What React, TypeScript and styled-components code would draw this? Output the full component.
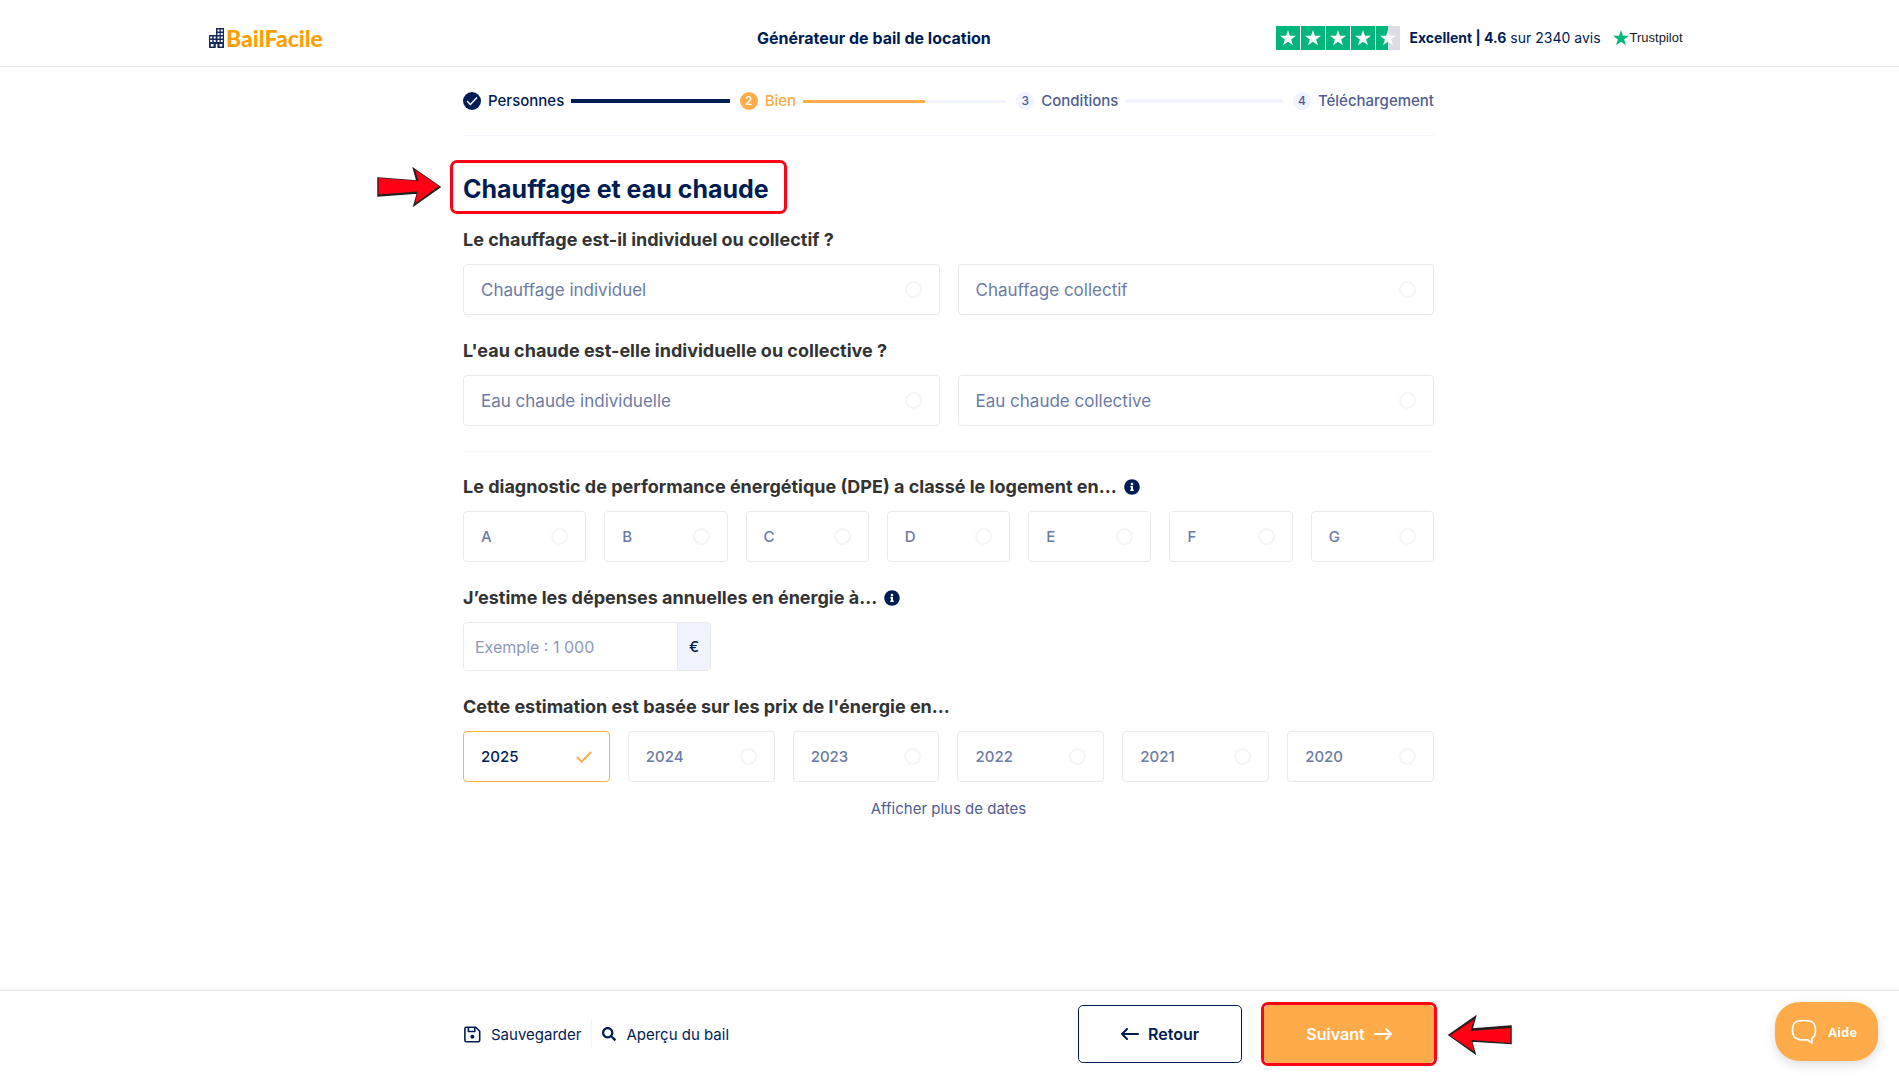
import React, { useState } from "react";
import styled, { createGlobalStyle, css } from "styled-components";
import { FaInfoCircle, FaSearch } from "react-icons/fa";

const navy = "#001c54";
const orange = "#ffab49";
const pale = "#f1f3ff";
const muted = "#6b7ba3";
const slate = "#4f5d92";
const line = "#e9e9ea";
const red = "#ff0015";

const Global = createGlobalStyle`
  *, *::before, *::after { box-sizing: border-box; }
  body { margin: 0; background: #fff; color: ${navy}; font-family: Inter, "Liberation Sans", sans-serif; }
  button, input { font-family: inherit; }
  h1, h2, p, ol, fieldset { margin: 0; padding: 0; border: 0; min-width: 0; }
  svg { display: block; flex: none; }
`;

const Page = styled.div`
  min-height: 100vh;
  display: flex;
  flex-direction: column;
`;

const Header = styled.header`
  display: grid;
  grid-template-columns: 548px 1fr auto;
  align-items: center;
  height: 67px;
  padding: 10px 11.4% 0 11%;
  border-bottom: 1px solid ${line};
`;

const Logo = styled.a`
  display: flex;
  align-items: center;
  gap: 2px;
  color: #ff9f05;
  font: 900 23px/24px Lato, sans-serif;
  text-decoration: none;
`;

const HeaderTitle = styled.p`
  font-size: 16px;
  line-height: 24px;
  font-weight: 700;
`;

const Reviews = styled.a`
  display: flex;
  align-items: center;
  color: ${navy};
  font-size: 14px;
  line-height: 24px;
  text-decoration: none;
  white-space: pre;
`;

const Stars = styled.span`
  display: flex;
  gap: 1px;
  margin-right: 10px;
`;

const StarTile = styled.span<{ $half?: boolean }>`
  display: grid;
  place-items: center;
  width: 24px;
  height: 24px;
  background: ${(p) => (p.$half ? "linear-gradient(90deg, #00b67a 50%, #dcdce6 50%)" : "#00b67a")};
`;

const Trustpilot = styled.span`
  display: flex;
  align-items: center;
  gap: 1px;
  margin-left: 12px;
  color: #191919;
  font: 13px/24px "Liberation Sans", Arial, sans-serif;
`;

const Main = styled.main`
  width: 100%;
  max-width: 1005px;
  margin: 0 auto;
  padding: 0 18px 24px 16px;
`;

const Steps = styled.ol`
  display: flex;
  align-items: center;
  height: 69px;
  border-bottom: 1px solid #f4f5fc;
  list-style: none;
`;

type StepState = "done" | "current" | "todo";

const Step = styled.li<{ $state: StepState }>`
  display: flex;
  align-items: center;
  flex: 1;
  font-size: 15px;
  line-height: 24px;
  font-weight: 500;
  color: ${(p) => ({ done: navy, current: orange, todo: slate })[p.$state]};
  &:last-child { flex: none; }
`;

const StepDot = styled.span<{ $state: StepState }>`
  display: grid;
  place-items: center;
  width: 18px;
  height: 18px;
  margin-right: 7px;
  border-radius: 50%;
  font-size: 12px;
  line-height: 18px;
  color: ${(p) => (p.$state === "todo" ? slate : "#fff")};
  background: ${(p) => ({ done: navy, current: orange, todo: pale })[p.$state]};
`;

const StepTrack = styled.span<{ $state: StepState }>`
  flex: 1;
  height: ${(p) => (p.$state === "current" ? 3 : 4)}px;
  margin: 0 10px 0 7px;
  background: ${(p) =>
    ({
      done: navy,
      current: `linear-gradient(90deg, ${orange} 60%, ${pale} 60%)`,
      todo: pale,
    })[p.$state]};
`;

const arrow = css`
  position: absolute;
  overflow: visible;
`;

const Title = styled.h1`
  position: relative;
  width: fit-content;
  margin-top: 38px;
  font-size: 25px;
  line-height: 30px;
  font-weight: 700;
  &::after {
    content: "";
    position: absolute;
    inset: -14px -18px -10px -13px;
    border: 3px solid ${red};
    border-radius: 7px;
  }
`;

const TitleArrow = styled.svg`
  ${arrow}
  right: calc(100% + 22px);
  top: -7px;
`;

const NextArrow = styled.svg`
  ${arrow}
  left: calc(100% + 15px);
  top: 9px;
`;

const Question = styled.h2`
  display: flex;
  align-items: center;
  gap: 7px;
  margin: 24px 0 12px;
  color: #333;
  font-size: 18px;
  line-height: 24px;
  font-weight: 700;
`;

const InfoButton = styled.button`
  padding: 0;
  border: 0;
  background: none;
  color: ${navy};
`;

const Options = styled.div<{ $columns: number }>`
  display: grid;
  grid-template-columns: repeat(${(p) => p.$columns}, 1fr);
  gap: 18px;
`;

const Option = styled.label<{ $checked: boolean; $compact: boolean }>`
  position: relative;
  display: flex;
  align-items: center;
  justify-content: space-between;
  height: 51px;
  padding: 0 17px;
  border: 1px solid ${(p) => (p.$checked ? "#ffb13d" : line)};
  border-radius: 4px;
  color: ${(p) => (p.$checked ? navy : muted)};
  font-size: ${(p) => (p.$compact ? 15 : 17)}px;
  line-height: 24px;
  font-weight: ${(p) => (p.$compact ? 500 : 400)};
  cursor: pointer;
`;

const HiddenRadio = styled.input`
  position: absolute;
  inset: 0;
  margin: 0;
  opacity: 0;
`;

const Ring = styled.span`
  width: 17px;
  height: 17px;
  border: 2px solid #f5f5f5;
  border-radius: 50%;
`;

const Separator = styled.hr`
  height: 1px;
  margin: 25px 0 -1px;
  border: 0;
  background: #f4f5fb;
`;

const Amount = styled.div`
  display: flex;
  width: 248px;
  height: 49px;
  border: 1px solid ${line};
  border-radius: 4px;
  overflow: hidden;
`;

const AmountInput = styled.input`
  flex: 1;
  min-width: 0;
  padding: 0 11px;
  border: 0;
  color: ${navy};
  font-size: 16px;
  &::placeholder { color: #8d99b6; opacity: 1; }
`;

const Unit = styled.span`
  display: grid;
  place-items: center;
  width: 33px;
  border-left: 1px solid #e6e8f2;
  background: ${pale};
  font-size: 15px;
  font-weight: 500;
`;

const MoreButton = styled.button`
  display: block;
  margin: 15px auto 0;
  padding: 0;
  border: 0;
  background: none;
  color: ${slate};
  font-size: 15px;
  line-height: 24px;
`;

const Footer = styled.footer`
  position: sticky;
  bottom: 0;
  margin-top: auto;
  border-top: 1px solid ${line};
  box-shadow: 0 -1px 3px rgba(0, 0, 0, 0.07);
  background: #fff;
`;

const FooterInner = styled.div`
  display: flex;
  align-items: center;
  justify-content: space-between;
  width: 100%;
  max-width: 1005px;
  margin: 0 auto;
  padding: 14px 18px 17px 17px;
`;

const Group = styled.div<{ $gap: number }>`
  display: flex;
  align-items: center;
  gap: ${(p) => p.$gap}px;
`;

const ToolButton = styled.button`
  display: flex;
  align-items: center;
  gap: 10px;
  height: 30px;
  padding: 0;
  border: 0;
  background: none;
  color: ${navy};
  font-size: 15px;
`;

const Divider = styled.span`
  width: 1px;
  height: 30px;
  background: ${pale};
`;

const NavButton = styled.button<{ $primary?: boolean }>`
  position: relative;
  display: flex;
  align-items: center;
  justify-content: center;
  gap: 9px;
  width: ${(p) => (p.$primary ? 170 : 164)}px;
  height: 58px;
  padding: 0;
  border: 1px solid ${(p) => (p.$primary ? orange : navy)};
  border-radius: 5px;
  background: ${(p) => (p.$primary ? orange : "#fff")};
  color: ${(p) => (p.$primary ? "#fff" : navy)};
  font-size: 16px;
  font-weight: 600;
  ${(p) =>
    p.$primary &&
    css`
      &::after {
        content: "";
        position: absolute;
        inset: -4px;
        border: 3px solid ${red};
        border-radius: 7px;
      }
    `}
`;

const Help = styled.button`
  position: fixed;
  right: 21px;
  bottom: 19px;
  display: flex;
  align-items: center;
  gap: 11px;
  width: 103px;
  height: 59px;
  padding: 0 16px;
  border: 0;
  border-radius: 25px / 24px;
  background: ${orange};
  box-shadow: 0 4px 12px rgba(0, 0, 0, 0.13);
  color: #fff;
  font: 700 13px/20px "Open Sans", sans-serif;
`;

const starPoints = "8,0 9.9,5.8 16,5.8 11.1,9.5 13,15.3 8,11.7 3,15.3 4.9,9.5 0,5.8 6.1,5.8";

const Star = ({ color }: { color: string }) => (
  <svg width="16" height="16" viewBox="0 0 16 16" aria-hidden>
    <polygon points={starPoints} fill={color} />
  </svg>
);

const Building = () => (
  <svg width="15" height="20" viewBox="0 0 15 20" aria-hidden>
    <path d="M0 7h7V0h8v20H0z" fill="#14295f" />
    <path
      fill="#fff"
      d="M8.5 1.5h2v2h-2zM11.8 1.5h2v2h-2zM8.5 5h2v2h-2zM11.8 5h2v2h-2zM8.5 8.5h2v2h-2zM11.8 8.5h2v2h-2zM8.5 12h2v2h-2zM11.8 12h2v2h-2zM1.2 8.5h2v2h-2zM4.7 8.5h2v2h-2zM1.2 12h2v2h-2zM4.7 12h2v2h-2zM1.8 16h2.7v2.6H1.8zM6.8 16h1.6v4H6.8zM10.6 16h2.7v2.6h-2.7z"
    />
  </svg>
);

const Arrow = ({ back }: { back?: boolean }) => (
  <svg width="18" height="12" viewBox="0 0 18 12" fill="none" stroke="currentColor" strokeWidth="2" strokeLinecap="round" strokeLinejoin="round" aria-hidden>
    <path d={back ? "M17 6H1M6 1 1 6l5 5" : "M1 6h16M12 1l5 5-5 5"} />
  </svg>
);

const SaveIcon = () => (
  <svg width="17" height="17" viewBox="0 0 17 17" fill="none" stroke="currentColor" strokeWidth="1.6" strokeLinejoin="round" aria-hidden>
    <path d="M2.3 1.3h9.4l4 4v9a1.4 1.4 0 0 1-1.4 1.4h-12A1.4 1.4 0 0 1 .9 14.3V2.7a1.4 1.4 0 0 1 1.4-1.4z" />
    <path d="M4.4 1.3v4.2h6.4V1.3" />
    <circle cx="8.4" cy="10.8" r="2" fill="currentColor" stroke="none" />
  </svg>
);

const CheckIcon = () => (
  <svg width="16" height="12" viewBox="0 0 16 12" fill="none" stroke={orange} strokeWidth="2" aria-hidden>
    <path d="M1 6l4.7 4.6L15 1" />
  </svg>
);

interface FieldProps {
  name: string;
  question: string;
  options: string[];
  info?: boolean;
  initial?: string;
  compact?: boolean;
}

function Field({ name, question, options, info, initial = "", compact = false }: FieldProps) {
  const [value, setValue] = useState(initial);
  return (
    <fieldset aria-labelledby={`${name}-q`}>
      <Question id={`${name}-q`}>
        {question}
        {info && <Info />}
      </Question>
      <Options $columns={options.length}>
        {options.map((o) => (
          <Option key={o} $checked={o === value} $compact={compact}>
            <HiddenRadio type="radio" name={name} checked={o === value} onChange={() => setValue(o)} />
            {o}
            {o === value ? <CheckIcon /> : <Ring />}
          </Option>
        ))}
      </Options>
    </fieldset>
  );
}

const Info = () => (
  <InfoButton type="button" aria-label="Plus d'informations">
    <FaInfoCircle size={16} />
  </InfoButton>
);

const steps: { label: string; state: StepState }[] = [
  { label: "Personnes", state: "done" },
  { label: "Bien", state: "current" },
  { label: "Conditions", state: "todo" },
  { label: "Téléchargement", state: "todo" },
];

export default function App() {
  return (
    <Page>
      <Global />
      <Header>
        <Logo href="#">
          <Building />
          BailFacile
        </Logo>
        <HeaderTitle>Générateur de bail de location</HeaderTitle>
        <Reviews href="#">
          <Stars>
            {[0, 1, 2, 3, 4].map((i) => (
              <StarTile key={i} $half={i === 4}>
                <Star color="#fff" />
              </StarTile>
            ))}
          </Stars>
          <b>Excellent | 4.6</b> sur 2340 avis
          <Trustpilot>
            <Star color="#00b67a" />
            Trustpilot
          </Trustpilot>
        </Reviews>
      </Header>

      <Main>
        <Steps>
          {steps.map(({ label, state }, i) => (
            <Step key={label} $state={state}>
              <StepDot $state={state}>
                {state === "done" ? (
                  <svg width="12" height="10" viewBox="0 0 12 10" fill="none" stroke="#fff" strokeWidth="1.4" aria-hidden>
                    <path d="M1 5l3.4 3.4L11 1.4" />
                  </svg>
                ) : (
                  i + 1
                )}
              </StepDot>
              {label}
              {i < steps.length - 1 && <StepTrack $state={state} />}
            </Step>
          ))}
        </Steps>

        <Title>
          Chauffage et eau chaude
          <TitleArrow width="64" height="40" viewBox="0 0 64 40" aria-hidden>
            <path d="M1 11l39 3-3.500-12.500L63 20 37 38.500l3.500-12.500L1 29z" fill="#231f20" stroke="#231f20" strokeWidth="1.500" />
            <path d="M1.500 11l40 3-3.500-11L62 19 38 36.500l2.500-12L1.500 27.500z" fill={red} />
          </TitleArrow>
        </Title>

        <Field name="chauffage" question="Le chauffage est-il individuel ou collectif ?" options={["Chauffage individuel", "Chauffage collectif"]} />
        <Field name="eau" question="L'eau chaude est-elle individuelle ou collective ?" options={["Eau chaude individuelle", "Eau chaude collective"]} />
        <Separator />
        <Field name="dpe" question="Le diagnostic de performance énergétique (DPE) a classé le logement en..." options={["A", "B", "C", "D", "E", "F", "G"]} info compact />
        <Question>
          <label htmlFor="depenses">J’estime les dépenses annuelles en énergie à...</label>
          <Info />
        </Question>
        <Amount>
          <AmountInput id="depenses" type="text" inputMode="numeric" placeholder="Exemple : 1 000" />
          <Unit>€</Unit>
        </Amount>
        <Field name="annee" question="Cette estimation est basée sur les prix de l'énergie en..." options={["2025", "2024", "2023", "2022", "2021", "2020"]} initial="2025" compact />
        <MoreButton type="button">Afficher plus de dates</MoreButton>
      </Main>

      <Footer>
        <FooterInner>
          <Group $gap={10}>
            <ToolButton type="button">
              <SaveIcon />
              Sauvegarder
            </ToolButton>
            <Divider />
            <ToolButton type="button">
              <FaSearch size={14} />
              Aperçu du bail
            </ToolButton>
          </Group>
          <Group $gap={22}>
            <NavButton type="button">
              <Arrow back />
              Retour
            </NavButton>
            <NavButton type="button" $primary>
              Suivant
              <Arrow />
              <NextArrow width="64" height="40" viewBox="0 0 64 40" aria-hidden>
                <path d="M63 11l-39 3 3.500-12.500L1 20l26 18.500L23.500 26 63 28.500z" fill="#231f20" stroke="#231f20" strokeWidth="1.500" />
                <path d="M62.500 13l-40 3L26 4.500 2 20.500l24 16-2.500-11.500 39 3z" fill={red} />
              </NextArrow>
            </NavButton>
          </Group>
        </FooterInner>
      </Footer>

      <Help type="button">
        <svg width="26" height="26" viewBox="0 0 26 26" fill="none" stroke="#fff" strokeWidth="1.700" strokeLinejoin="round" aria-hidden>
          <path d="M13 1.500c8.500 0 11.500 2.500 11.500 9.500 0 4-1 6.800-3.500 8.300v4.700l-4.500-3.200c-1 .1-2.200.1-3.500.1C4.500 20.900 1.500 18 1.500 11S4.500 1.500 13 1.500z" />
        </svg>
        Aide
      </Help>
    </Page>
  );
}
